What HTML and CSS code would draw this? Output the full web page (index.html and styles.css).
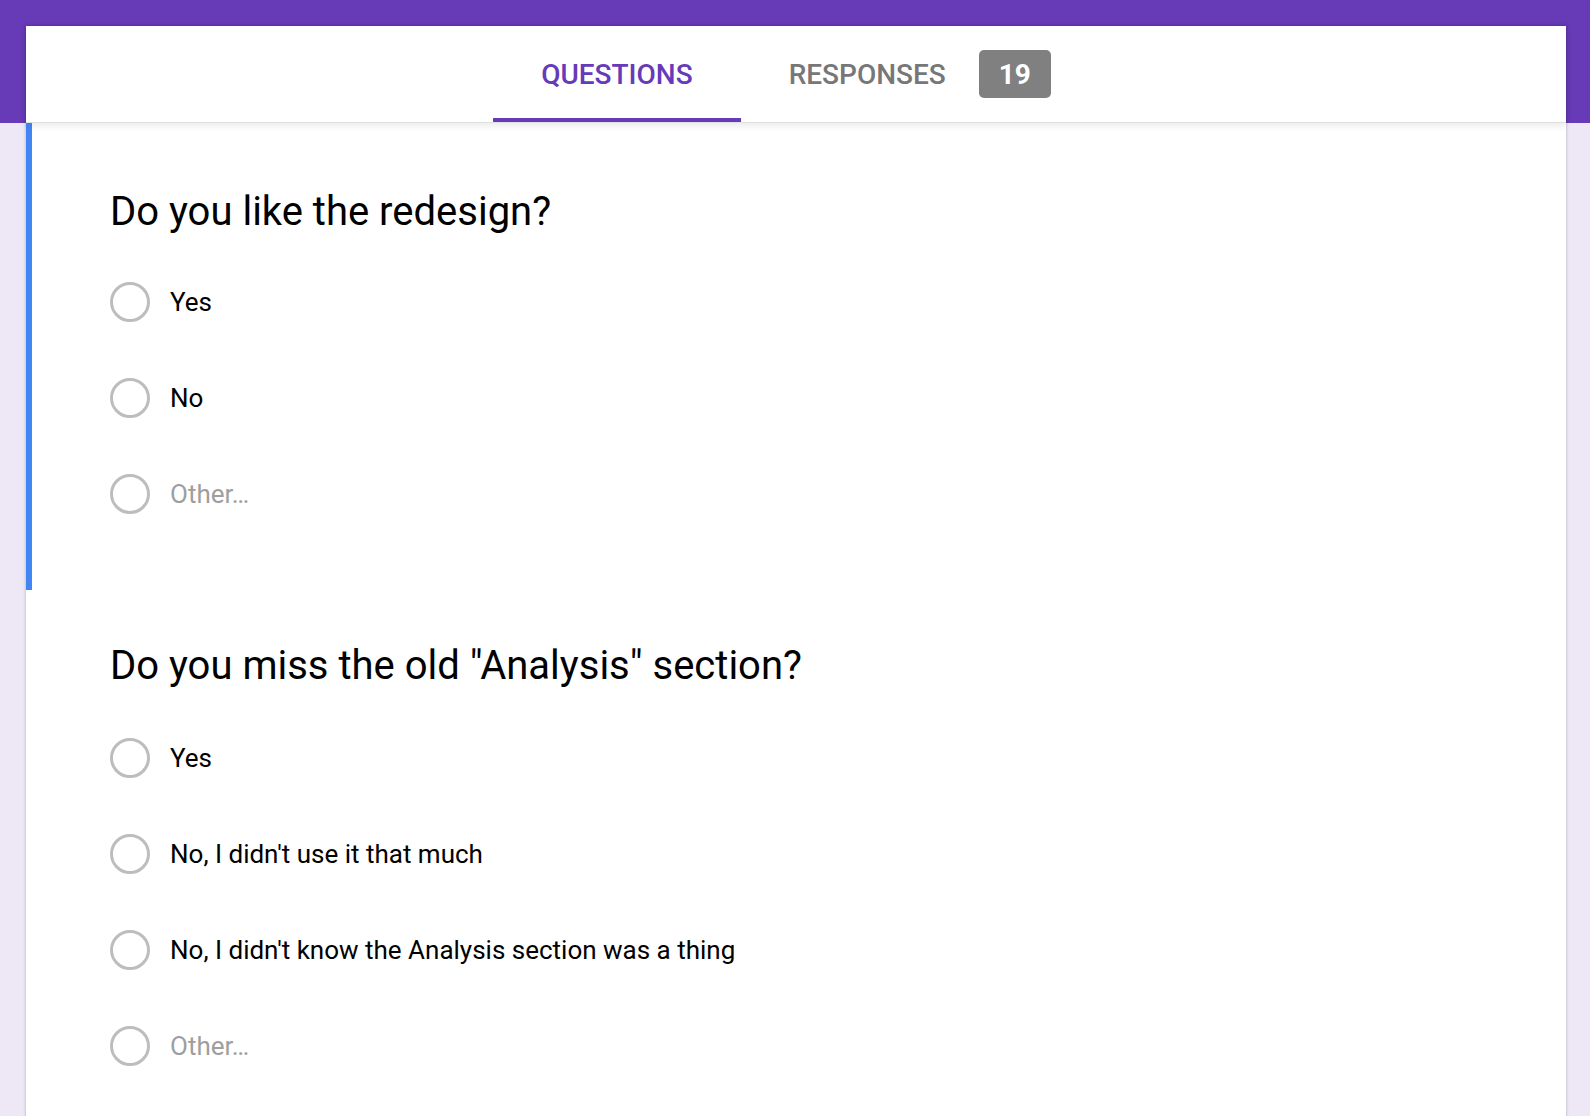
FILE: index.html
```html
<!DOCTYPE html>
<html lang="en">
<head>
    <meta charset="UTF-8">
    <meta name="viewport" content="width=device-width, initial-scale=1.0">
    <title>Form Editor</title>
    <link rel="stylesheet" href="styles.css">
</head>
<body>
    <div class="card">
        <div class="tabs">
            <div class="tab active">QUESTIONS</div>
            <div class="tab">RESPONSES <span class="badge">19</span></div>
        </div>

        <div class="question active">
            <div class="title">Do you like the redesign?</div>
            <div class="option"><span class="radio"></span><span class="label">Yes</span></div>
            <div class="option"><span class="radio"></span><span class="label">No</span></div>
            <div class="option"><span class="radio"></span><span class="label other">Other…</span></div>
        </div>

        <div class="question second">
            <div class="title">Do you miss the old "Analysis" section?</div>
            <div class="option"><span class="radio"></span><span class="label">Yes</span></div>
            <div class="option"><span class="radio"></span><span class="label">No, I didn't use it that much</span></div>
            <div class="option"><span class="radio"></span><span class="label">No, I didn't know the Analysis section was a thing</span></div>
            <div class="option"><span class="radio"></span><span class="label other">Other…</span></div>
        </div>
    </div>
</body>
</html>
```

FILE: styles.css
```css
html, body {
    height: 100%;
}
body {
    margin: 0;
    font-family: Roboto, "Liberation Sans", Arial, sans-serif;
    background: linear-gradient(#673ab7 0, #673ab7 123px, #ede7f6 123px);
    overflow: hidden;
}
.card {
    margin: 26px 24px 0 26px;
    background-color: #ffffff;
    box-shadow: 0 0 3px rgba(0, 0, 0, 0.25);
    min-height: 1200px;
}
.tabs {
    position: relative;
    z-index: 1;
    display: flex;
    justify-content: center;
    height: 96px;
    background-color: #ffffff;
    border-bottom: 1px solid #e0e0e0;
    box-shadow: 0 2px 8px rgba(0, 0, 0, 0.1);
}
.tab {
    display: flex;
    align-items: center;
    padding: 4px 48px 0;
    border-bottom: 4px solid transparent;
    font-size: 28px;
    font-weight: 500;
    color: #777777;
}
.tab.active {
    color: #673ab7;
    border-bottom-color: #673ab7;
}
.badge {
    display: inline-flex;
    align-items: center;
    justify-content: center;
    width: 72px;
    height: 48px;
    margin-left: 33px;
    border-radius: 5px;
    background-color: #808080;
    color: #ffffff;
    font-weight: 700;
}
.question {
    border-left: 6px solid transparent;
    padding: 65px 0 48px 78px;
}
.question.active {
    border-left-color: #4285f4;
}
.question.second {
    padding-top: 52px;
}
.title {
    font-size: 40px;
    line-height: 48px;
    color: #000000;
    margin-bottom: 18px;
}
.second .title {
    margin-bottom: 20px;
}
.option {
    display: flex;
    align-items: center;
    height: 96px;
}
.radio {
    box-sizing: border-box;
    width: 40px;
    height: 40px;
    border: 3px solid #bdbdbd;
    border-radius: 50%;
    margin-right: 20px;
}
.label {
    font-size: 26px;
    color: #000000;
}
.label.other {
    color: #9e9e9e;
}
```
